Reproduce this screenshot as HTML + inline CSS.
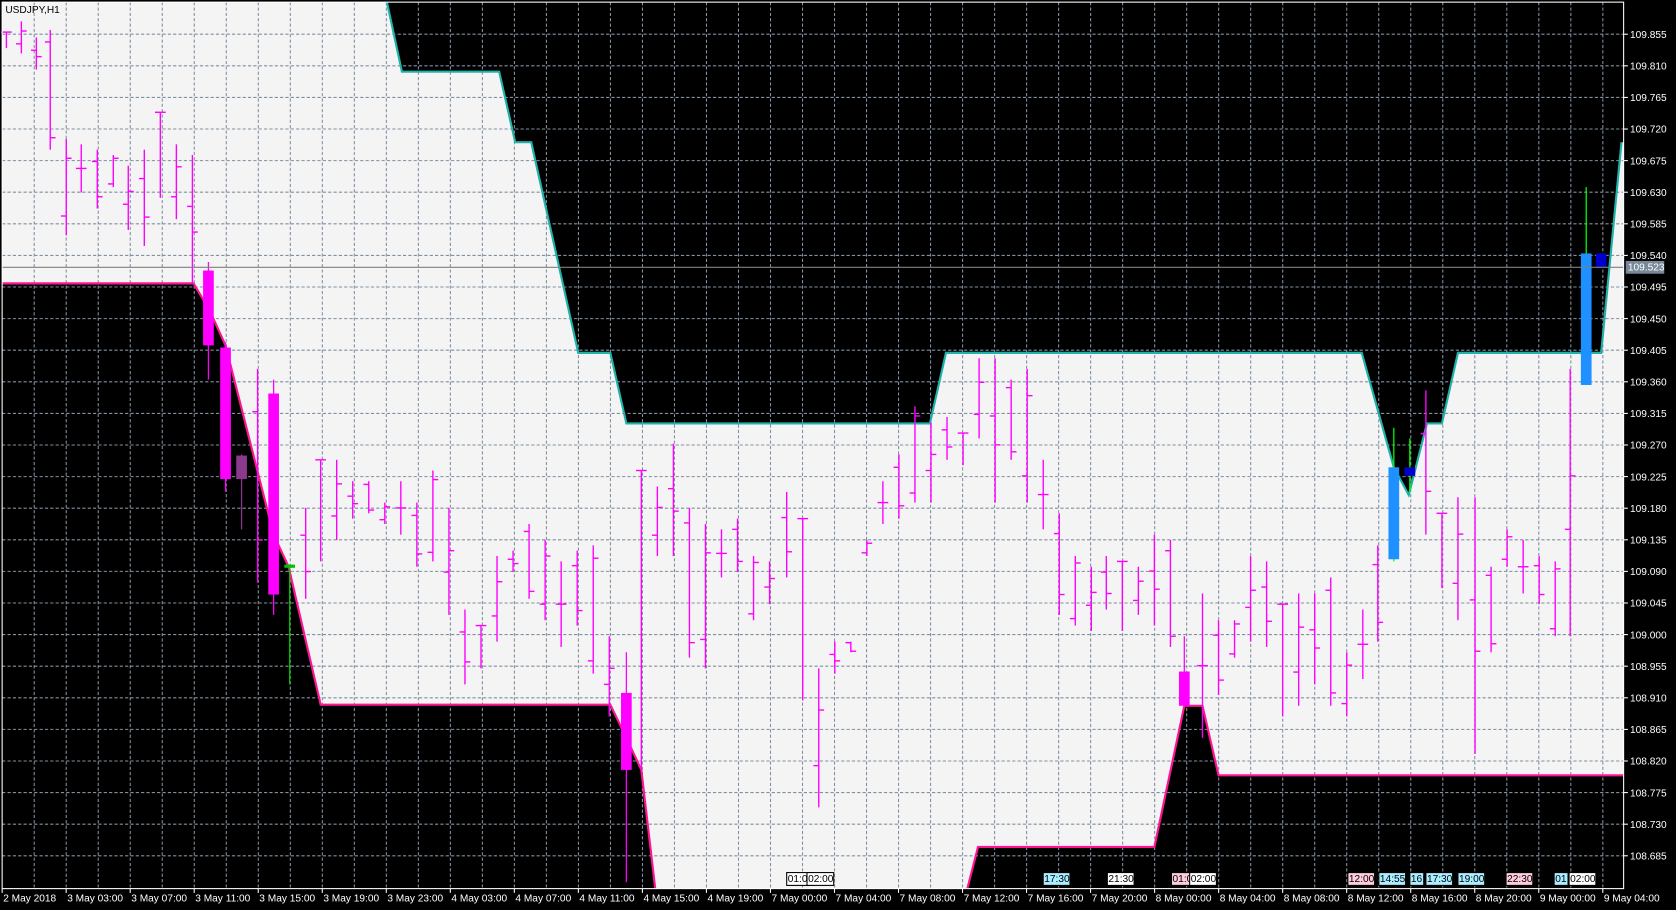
<!DOCTYPE html>
<html><head><meta charset="utf-8"><style>
html,body{margin:0;padding:0;background:#000;overflow:hidden}
svg{display:block}
text{font-family:"Liberation Sans",sans-serif;font-size:9.5px;fill:#fff}
</style></head><body>
<svg id="s" width="1676" height="910" viewBox="0 0 1568 851" preserveAspectRatio="none" xmlns="http://www.w3.org/2000/svg">
<rect x="0" y="0" width="1568" height="851" fill="#000"/>
<polygon fill="#f4f4f4" points="2,2 362,2 376,67 467,67 482,133 497,133 541,330 571,330 586,396 870,396 885,330 1274,330 1304,437 1318,463 1335,396 1349,396 1364,330 1498,330 1517,133 1519,133 1519,725 1140,725 1125,660 1108,660 1080,792 915,792 905,831 613,831 600,720 586,690 571,659 300,659 270,530 256,500 211,323 196,290 181,265 2,265"/>
<g id="grid" stroke="#8090a0" stroke-width="1" stroke-dasharray="3,2" fill="none"></g>
<polyline fill="none" stroke="#20b2aa" stroke-width="2" points="362,2 376,67 467,67 482,133 497,133 541,330 571,330 586,396 870,396 885,330 1274,330 1304,437 1318,463 1335,396 1349,396 1364,330 1498,330 1517,133"/>
<polyline fill="none" stroke="#ff1493" stroke-width="2" points="2,265 181,265 196,290 211,323 256,500 270,530 300,659 571,659 586,690 600,720 613,831"/>
<polyline fill="none" stroke="#ff1493" stroke-width="2" points="905,831 915,792 1080,792 1108,660 1125,660 1140,725 1519,725"/>
<g id="bars"></g>
<line x1="2" y1="250" x2="1519" y2="250" stroke="#808080" stroke-width="1"/>
<rect x="2" y="2" width="1517" height="829" fill="none" stroke="#fff" stroke-width="1"/>
<text x="5" y="12" style="fill:#000">USDJPY,H1</text>
<g id="axis"></g>
<rect x="1521" y="244" width="36" height="12" fill="#778899"/>
<text x="1523" y="253" style="fill:#fff">109.523</text>
<g id="marks"></g>
</svg>
<script>
var NS="http://www.w3.org/2000/svg";
function el(p,t,a,txt){var e=document.createElementNS(NS,t);for(var k in a)e.setAttribute(k,a[k]);if(txt)e.textContent=txt;p.appendChild(e);return e;}
var g=document.getElementById('grid'),ax=document.getElementById('axis');
for(var i=0;i<27;i++){var y=32+i*29.55;el(g,'line',{x1:2,y1:y,x2:1519,y2:y});
 var p=(109.855-i*0.045).toFixed(3);el(ax,'line',{x1:1519,y1:y,x2:1523,y2:y,stroke:'#fff'});el(ax,'text',{x:1525,y:y+3.5},p);}
for(var x=32;x<1519;x+=29.95){el(g,'line',{x1:x,y1:2,x2:x,y2:831});}
var labs=["2 May 2018","3 May 03:00","3 May 07:00","3 May 11:00","3 May 15:00","3 May 19:00","3 May 23:00","4 May 03:00","4 May 07:00","4 May 11:00","4 May 15:00","4 May 19:00","7 May 00:00","7 May 04:00","7 May 08:00","7 May 12:00","7 May 16:00","7 May 20:00","8 May 00:00","8 May 04:00","8 May 08:00","8 May 12:00","8 May 16:00","8 May 20:00","9 May 00:00","9 May 04:00"];
for(var i=0;i<labs.length;i++){var x=2+i*59.9;el(ax,'line',{x1:x,y1:831,x2:x,y2:835,stroke:'#fff'});el(ax,'text',{x:x+1,y:843},labs[i]);}
var B=[[6,30,45],[20,20,50],[34,35,65],[47,28,140],[62,130,220],[76,135,180],[91,140,195],[106,145,175],[120,155,215],[135,140,230],[150,105,185],[165,135,205],[180,145,265],
[195,245,355,253,323,'m'],[211,320,460,325,448,'m'],[226,425,495,426,448,'p'],[241,345,545],[256,355,575,368,556,'m'],[271,528,640,528,531,'g'],[286,475,560],[300,430,525],[315,430,505],[330,450,485],[345,450,480],[360,470,490],[375,450,500],[390,470,530],[405,440,525],[420,475,575],[435,570,640],[450,585,625],[465,520,600],[480,515,535],[495,490,560],[510,505,580],[525,525,605],[540,515,585],[555,510,630],[570,595,670],[586,610,825,648,720,'m'],[600,440,720],[615,455,520],[630,415,520],[645,475,615],[660,490,625],[675,495,540],[690,485,535],[705,520,580],[720,525,565],[736,460,540],[751,485,655],[766,625,755],[781,600,630],[796,600,610],[811,505,520],[826,450,490],[841,425,485],[856,380,470],[871,395,470],[886,390,430],[901,405,435],[916,335,410],[931,335,470],[946,355,430],[961,345,470],[976,430,495],[991,480,575],[1006,520,585],[1021,530,590],[1035,520,570],[1050,525,590],[1065,530,575],[1080,500,585],[1095,505,605],[1108,595,660,628,660,'m'],[1125,555,690],[1140,580,650],[1155,580,615],[1170,520,600],[1185,525,605],[1200,565,670],[1215,555,660],[1230,555,640],[1245,540,660],[1260,610,670],[1275,570,635],[1289,510,600],
[1304,400,525,437,523,'b'],[1319,410,460,437,445,'d'],[1334,365,500],[1349,480,550],[1364,465,580],[1380,465,705],[1395,530,610],[1410,495,530],[1425,505,555],[1440,520,565],[1455,525,595],[1469,345,595],[1484,175,360,237,360,'b'],[1498,237,250,237,250,'d']];
var bg=document.getElementById('bars');
B.forEach(function(b,i){var x=b[0];
 if(b.length>3){var col={m:'#ff00ff',p:'#8b3a8b',g:'#00c000',b:'#1e90ff',d:'#0000cd'}[b[5]];
  var wc=(b[5]=='b'||b[5]=='d')?'#00ff00':col;
  el(bg,'line',{x1:x,y1:b[1],x2:x,y2:b[2],stroke:wc,'stroke-width':1.2});
  el(bg,'rect',{x:x-5,y:b[3],width:10,height:Math.max(2,b[4]-b[3]),fill:col});
 }else{var h=b[1],l=b[2],o=h+(l-h)*((i*37%10)/10),c=h+(l-h)*((i*53%10)/10);
  el(bg,'line',{x1:x,y1:h,x2:x,y2:l,stroke:'#ff00ff','stroke-width':1.3});
  el(bg,'line',{x1:x-5,y1:o,x2:x,y2:o,stroke:'#ff00ff','stroke-width':1.3});
  el(bg,'line',{x1:x,y1:c,x2:x+5,y2:c,stroke:'#ff00ff','stroke-width':1.3});}
});
var mk=document.getElementById('marks');
[[736,'01:00','#fff'],[755,'02:00','#fff'],[976,'17:30','#aef'],[1036,'21:30','#fff'],[1096,'01:00','#fcd'],[1113,'02:00','#fff'],[1261,'12:00','#fcd'],[1290,'14:55','#aef'],[1319,'16:','#aef'],[1334,'17:30','#aef'],[1364,'19:00','#aef'],[1409,'22:30','#fcd'],[1454,'01:','#aef'],[1468,'02:00','#fff']].forEach(function(m){
 var w=m[1].length>3?25:13;el(mk,'rect',{x:m[0],y:816,width:w,height:12,fill:m[2],stroke:'#000'});
 var t=el(mk,'text',{x:m[0]+1,y:825},m[1]);t.style.fill='#000';});
</script>
</body></html>
